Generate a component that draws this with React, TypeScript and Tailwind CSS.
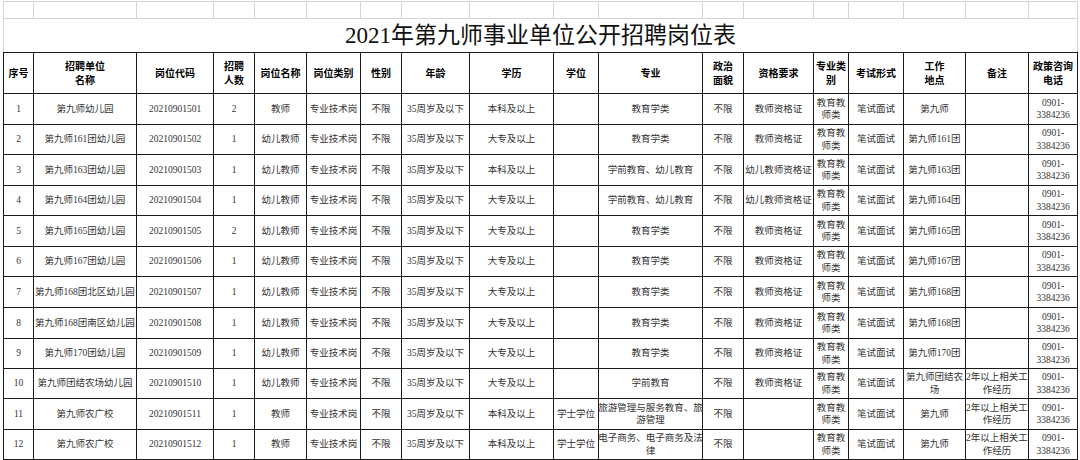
const cols =
  'grid grid-cols-[30px_103px_77px_41px_52px_54px_41px_68px_84px_45px_104px_41px_70px_35px_55px_62px_63px_49px]'

const headers = [
  '序号',
  '招聘单位\n名称',
  '岗位代码',
  '招聘\n人数',
  '岗位名称',
  '岗位类别',
  '性别',
  '年龄',
  '学历',
  '学位',
  '专业',
  '政治\n面貌',
  '资格要求',
  '专业类\n别',
  '考试形式',
  '工作\n地点',
  '备注',
  '政策咨询\n电话',
]

const phone = '0901-\n3384236'
const cat = '教育教\n师类'
const exp = '2年以上相关工\n作经历'

const rows: string[][] = [
  ['1', '第九师幼儿园', '20210901501', '2', '教师', '专业技术岗', '不限', '35周岁及以下', '本科及以上', '', '教育学类', '不限', '教师资格证', cat, '笔试面试', '第九师', '', phone],
  ['2', '第九师161团幼儿园', '20210901502', '1', '幼儿教师', '专业技术岗', '不限', '35周岁及以下', '大专及以上', '', '教育学类', '不限', '教师资格证', cat, '笔试面试', '第九师161团', '', phone],
  ['3', '第九师163团幼儿园', '20210901503', '1', '幼儿教师', '专业技术岗', '不限', '35周岁及以下', '本科及以上', '', '学前教育、幼儿教育', '不限', '幼儿教师资格证', cat, '笔试面试', '第九师163团', '', phone],
  ['4', '第九师164团幼儿园', '20210901504', '1', '幼儿教师', '专业技术岗', '不限', '35周岁及以下', '大专及以上', '', '学前教育、幼儿教育', '不限', '幼儿教师资格证', cat, '笔试面试', '第九师164团', '', phone],
  ['5', '第九师165团幼儿园', '20210901505', '2', '幼儿教师', '专业技术岗', '不限', '35周岁及以下', '大专及以上', '', '教育学类', '不限', '教师资格证', cat, '笔试面试', '第九师165团', '', phone],
  ['6', '第九师167团幼儿园', '20210901506', '1', '幼儿教师', '专业技术岗', '不限', '35周岁及以下', '大专及以上', '', '教育学类', '不限', '教师资格证', cat, '笔试面试', '第九师167团', '', phone],
  ['7', '第九师168团北区幼儿园', '20210901507', '1', '幼儿教师', '专业技术岗', '不限', '35周岁及以下', '大专及以上', '', '教育学类', '不限', '教师资格证', cat, '笔试面试', '第九师168团', '', phone],
  ['8', '第九师168团南区幼儿园', '20210901508', '1', '幼儿教师', '专业技术岗', '不限', '35周岁及以下', '大专及以上', '', '教育学类', '不限', '教师资格证', cat, '笔试面试', '第九师168团', '', phone],
  ['9', '第九师170团幼儿园', '20210901509', '1', '幼儿教师', '专业技术岗', '不限', '35周岁及以下', '大专及以上', '', '教育学类', '不限', '教师资格证', cat, '笔试面试', '第九师170团', '', phone],
  ['10', '第九师团结农场幼儿园', '20210901510', '1', '幼儿教师', '专业技术岗', '不限', '35周岁及以下', '大专及以上', '', '学前教育', '不限', '教师资格证', cat, '笔试面试', '第九师团结农\n场', exp, phone],
  ['11', '第九师农广校', '20210901511', '1', '教师', '专业技术岗', '不限', '35周岁及以下', '本科及以上', '学士学位', '旅游管理与服务教育、旅\n游管理', '不限', '', cat, '笔试面试', '第九师', exp, phone],
  ['12', '第九师农广校', '20210901512', '1', '教师', '专业技术岗', '不限', '35周岁及以下', '本科及以上', '学士学位', '电子商务、电子商务及法\n律', '不限', '', cat, '笔试面试', '第九师', exp, phone],
]

// row heights incl. bottom border, so the lines land where the sheet has them
const tall = [true, false, true, false, true, false, true, true, false, false, true, false]

export default function App() {
  return (
    <div className="w-[1080px] h-[460px] overflow-hidden bg-white pt-px pl-[3px] font-['Liberation_Serif','Noto_Sans_CJK_SC',serif]">
      <div className="w-[1075px]">
        {/* empty spreadsheet row above the title */}
        <div className={`${cols} border-l border-t border-[#d4d4d4]`}>
          {headers.map((_, i) => (
            <div key={i} className="h-[17px] border-r border-b border-[#d4d4d4]" />
          ))}
        </div>

        {/* merged title cell */}
        <div className="h-[33px] border-x border-[#d4d4d4] flex items-center justify-center pt-[1px] text-[23px] text-[#111]">
          2021年第九师事业单位公开招聘岗位表
        </div>

        <div className="border-l border-t border-[#1a1a1a]">
          <div className={cols}>
            {headers.map((h, i) => (
              <div
                key={i}
                className="h-[41px] border-r border-b border-[#1a1a1a] flex items-center justify-center text-center whitespace-pre leading-[14px] text-[10px] font-bold text-black font-['Noto_Sans_CJK_SC',sans-serif]"
              >
                {h}
              </div>
            ))}
          </div>

          {rows.map((r, ri) => (
            <div key={ri} className={cols}>
              {r.map((c, ci) => (
                <div
                  key={ci}
                  className={`${tall[ri] ? 'h-[31px]' : 'h-[30px]'} border-r border-b border-[#1a1a1a] flex items-center justify-center text-center whitespace-pre leading-[12.5px] text-[9.5px] text-[#333]`}
                >
                  {c}
                </div>
              ))}
            </div>
          ))}
        </div>
      </div>
    </div>
  )
}
